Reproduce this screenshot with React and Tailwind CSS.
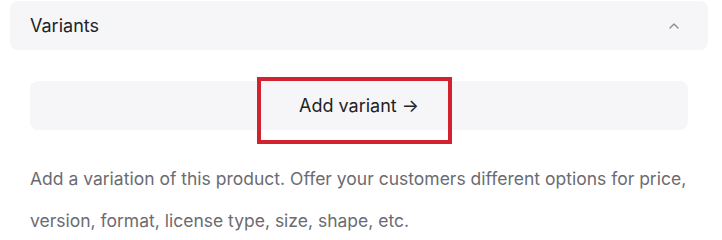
import React from "react";
import { ChevronUp } from "lucide-react";

const font = { fontFamily: "Inter, 'Noto Sans', sans-serif" };

const SectionHeader = ({ title }) => {
  return (
    <div className="flex items-center justify-between h-[49px] rounded-lg bg-[#f6f6f8] pl-5 pr-[26px]">
      <span className="text-[18px] text-[#222226]">{title}</span>
      <ChevronUp size={16} strokeWidth={2} className="text-[#8a8a90]" />
    </div>
  );
};

const AddVariantButton = () => {
  return (
    <div className="relative mt-[31px]">
      <button className="flex w-full h-[49px] items-center justify-center rounded-lg bg-[#f6f6f8] text-[18px] text-[#222226]">
        Add variant →
      </button>
      {/* annotation frame */}
      <div className="absolute left-[227px] top-[-4px] w-[195px] h-[67px] border-4 border-[#d3222f] pointer-events-none" />
    </div>
  );
};

export default function App() {
  return (
    <div className="w-[722px] h-[232px] bg-white overflow-hidden pt-[1px] pl-[10px] pr-[14px]" style={font}>
      <SectionHeader title="Variants" />
      <div className="px-5">
        <AddVariantButton />
        <p className="mt-[28px] w-[680px] text-[17.5px] leading-[42px] text-[#6b6b72]">
          Add a variation of this product. Offer your customers different options for price, version, format, license type, size, shape, etc.
        </p>
      </div>
    </div>
  );
}
